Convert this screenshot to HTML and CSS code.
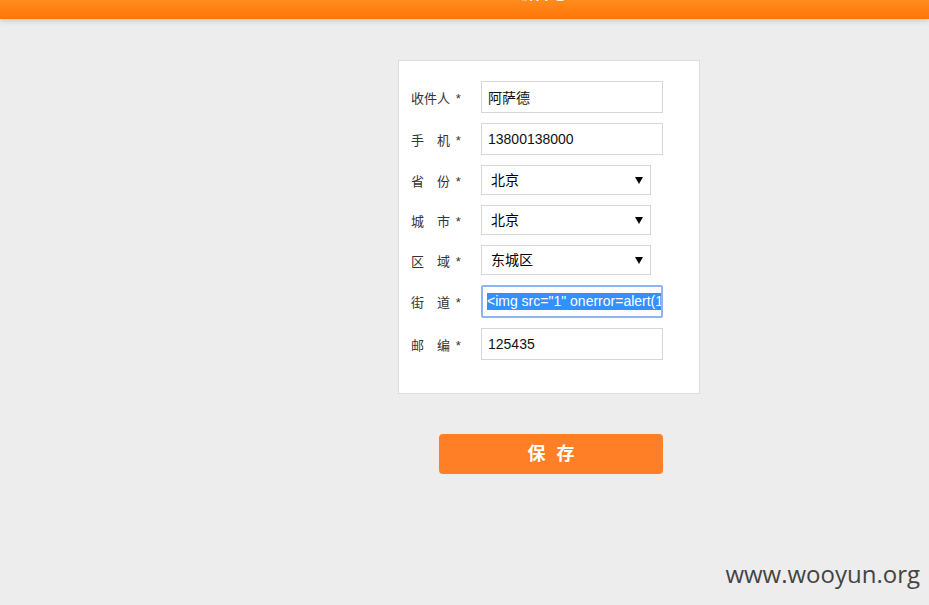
FILE: index.html
```html
<!DOCTYPE html>
<html>
	<head>
		<meta charset="UTF-8">
		<title>编辑地址</title>
		<link rel="stylesheet" href="styles.css">
	</head>
	<body>
		<div id="top_bar">
			<div class="wrap"><h1 class="title">编辑地址</h1></div>
		</div>
		<div class="wrap">
			<div id="form_box">
				<div class="row">
					<label class="label">收件人 <i>*</i></label>
					<input class="field" type="text" value="阿萨德">
				</div>
				<div class="row">
					<label class="label">手　机 <i>*</i></label>
					<input class="field" type="text" value="13800138000">
				</div>
				<div class="row">
					<label class="label">省　份 <i>*</i></label>
					<div class="select_box"><select class="sel"><option>北京</option></select></div>
				</div>
				<div class="row">
					<label class="label">城　市 <i>*</i></label>
					<div class="select_box"><select class="sel"><option>北京</option></select></div>
				</div>
				<div class="row">
					<label class="label">区　域 <i>*</i></label>
					<div class="select_box"><select class="sel"><option>东城区</option></select></div>
				</div>
				<div class="row">
					<label class="label">街　道 <i>*</i></label>
					<div class="field focus"><span class="picked">&lt;img src="1" onerror=alert(1)&gt;</span></div>
				</div>
				<div class="row">
					<label class="label">邮　编 <i>*</i></label>
					<input class="field" type="text" value="125435">
				</div>
			</div>
			<div class="btn_row"><a class="btn_save">保 存</a></div>
		</div>
		<div id="mark">www.wooyun.org</div>
	</body>
</html>
```

FILE: styles.css
```css
*{margin: 0;padding: 0;box-sizing: border-box;}
body{
	background: #ededed;
	font-family: "Liberation Sans", "Noto Sans CJK SC", sans-serif;
	color: #333;
	height: 605px;
	overflow: hidden;
}
#top_bar{
	height: 19px;
	overflow: hidden;
	background: linear-gradient(#ff8c1e, #ff7505);
	box-shadow: 0 2px 5px rgba(0,0,0,0.15);
}
.wrap{
	width: 302px;
	margin-left: 398px;
}
.title{
	font-size: 16px;
	font-weight: bold;
	color: #fff;
	text-align: center;
	line-height: 20px;
	margin-top: -16px;
}
#form_box{
	margin-top: 41px;
	background: #fff;
	border: 1px solid #dcdcdc;
	padding: 20px 0 33px 12px;
	display: flex;
	flex-direction: column;
	gap: 10px;
}
.row{
	display: flex;
	align-items: center;
}
.label{
	width: 70px;
	font-size: 13px;
	color: #333;
}
.label i{
	font-style: normal;
	margin-left: 2px;
}
.field{
	width: 182px;
	height: 32px;
	border: 1px solid #d6d6d6;
	padding: 0 6px;
	font-family: "Liberation Sans", "Noto Sans CJK SC", sans-serif;
	font-size: 14px;
	color: #111;
	background: #fff;
	outline: none;
}
.field.focus{
	height: 33px;
	border: 2px solid #8fb4f2;
	border-radius: 2px;
	padding: 0 4px;
	display: flex;
	align-items: center;
	overflow: hidden;
	white-space: nowrap;
}
.picked{
	background: #3390ff;
	color: #fff;
	line-height: 17px;
}
.select_box{
	position: relative;
	width: 170px;
	height: 30px;
}
.select_box::after{
	content: "";
	position: absolute;
	right: 8px;
	top: 12px;
	border-left: 4px solid transparent;
	border-right: 4px solid transparent;
	border-top: 7px solid #000;
	pointer-events: none;
}
.sel{
	appearance: none;
	-webkit-appearance: none;
	width: 170px;
	height: 30px;
	border: 1px solid #d6d6d6;
	border-radius: 0;
	background: #fff;
	padding: 0 9px;
	font-family: "Liberation Sans", "Noto Sans CJK SC", sans-serif;
	font-size: 14px;
	color: #000;
	outline: none;
}
.btn_row{
	margin-top: 40px;
	padding-left: 41px;
}
.btn_save{
	display: block;
	width: 224px;
	height: 40px;
	line-height: 40px;
	background: #ff7f27;
	border-radius: 4px;
	color: #fff;
	font-size: 18px;
	font-weight: bold;
	text-align: center;
	letter-spacing: 3px;
	text-indent: 3px;
}
#mark{
	position: absolute;
	right: 9px;
	bottom: 15px;
	font-family: "Open Sans", sans-serif;
	font-size: 24px;
	color: #444;
}
```
